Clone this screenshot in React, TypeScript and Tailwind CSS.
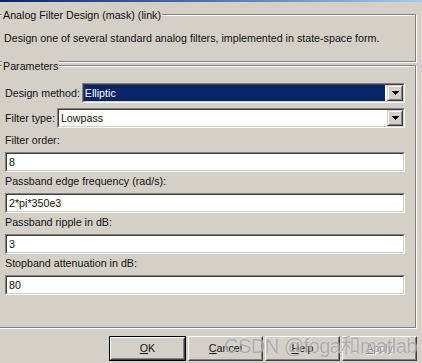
import React from "react";

const etched =
  "border border-[#808080] shadow-[1px_1px_0_#ffffff,inset_1px_1px_0_#ffffff]";

function Sunken({ children }: { children: React.ReactNode }) {
  return (
    <div className="h-[20px] border border-t-[#808080] border-l-[#808080] border-b-white border-r-white">
      <div className="h-full flex items-stretch bg-white border border-t-[#404040] border-l-[#404040] border-b-[#d4d0c8] border-r-[#d4d0c8]">
        {children}
      </div>
    </div>
  );
}

function DropButton() {
  return (
    <div className="w-[16px] shrink-0 bg-[#d4d0c8] border border-t-[#d4d0c8] border-l-[#d4d0c8] border-b-[#404040] border-r-[#404040]">
      <div className="h-full flex items-center justify-center border border-t-white border-l-white border-b-[#808080] border-r-[#808080]">
        <svg width="7" height="4" viewBox="0 0 7 4" shapeRendering="crispEdges">
          <path d="M0 0h7v1h-1v1h-1v1h-1v1h-1v-1h-1v-1h-1v-1h-1z" fill="#000" />
        </svg>
      </div>
    </div>
  );
}

function Combo({ value, selected }: { value: string; selected?: boolean }) {
  return (
    <Sunken>
      <div className="flex-1 flex items-center pr-[1px]">
        <span
          className={
            selected
              ? "flex-1 h-full flex items-center pl-[1px] bg-[#0a246a] text-white mr-[1px]"
              : "flex-1 h-full flex items-center pl-[2px]"
          }
        >
          {value}
        </span>
      </div>
      <DropButton />
    </Sunken>
  );
}

function Field({ label, value }: { label: string; value: string }) {
  return (
    <div className="flex flex-col">
      <div className="h-[14px] leading-[14px] mb-[5px]">{label}</div>
      <Sunken>
        <span className="flex items-center pl-[2px]">{value}</span>
      </Sunken>
    </div>
  );
}

function PushButton({
  children,
  isDefault,
  disabled,
}: {
  children: React.ReactNode;
  isDefault?: boolean;
  disabled?: boolean;
}) {
  return (
    <div
      className={
        isDefault
          ? "w-[77px] h-[25px] border border-black"
          : "w-[75px] h-[25px]"
      }
    >
      <div className="h-full border border-t-white border-l-white border-b-[#404040] border-r-[#404040]">
        <div
          className={
            disabled
              ? "h-full flex items-center justify-center border border-t-[#d4d0c8] border-l-[#d4d0c8] border-b-[#808080] border-r-[#808080] text-[#808080] [text-shadow:1px_1px_0_#ffffff]"
              : "h-full flex items-center justify-center border border-t-[#d4d0c8] border-l-[#d4d0c8] border-b-[#808080] border-r-[#808080]"
          }
        >
          {children}
        </div>
      </div>
    </div>
  );
}

export default function App() {
  return (
    <div className="relative w-[422px] h-[363px] overflow-hidden bg-[#d4d0c8] text-[#111] text-[10.7px] font-['Liberation_Sans',Arial,sans-serif]">
      <div className="h-[2px] bg-gradient-to-r from-[#0a246a] to-[#a6caf0]" />

      {/* mask description */}
      <div className={`relative mt-[12px] -ml-[4px] w-[420px] h-[48px] ${etched}`}>
        <span className="absolute -top-[7px] left-[5px] px-[1px] bg-[#d4d0c8] leading-[14px]">
          Analog Filter Design (mask) (link)
        </span>
        <div className="pt-[17px] pl-[7px] leading-[13px]">
          Design one of several standard analog filters, implemented in state-space form.
        </div>
      </div>

      {/* parameters */}
      <div className={`relative mt-[3px] -ml-[4px] w-[420px] h-[263px] ${etched}`}>
        <span className="absolute -top-[7px] left-[5px] px-[1px] bg-[#d4d0c8] leading-[14px]">
          Parameters
        </span>
        <div className="pt-[17px] pl-[8px] pr-[10px] flex flex-col">
          <div className="flex items-center gap-[2px]">
            <span className="whitespace-nowrap">Design method:</span>
            <div className="flex-1">
              <Combo value="Elliptic" selected />
            </div>
          </div>
          <div className="flex items-center gap-[2px] mt-[5px]">
            <span className="whitespace-nowrap">Filter type:</span>
            <div className="flex-1">
              <Combo value="Lowpass" />
            </div>
          </div>
          <div className="mt-[5px] flex flex-col gap-[2px]">
            <Field label="Filter order:" value="8" />
            <Field label="Passband edge frequency (rad/s):" value="2*pi*350e3" />
            <Field label="Passband ripple in dB:" value="3" />
            <Field label="Stopband attenuation in dB:" value="80" />
          </div>
        </div>
      </div>

      {/* buttons */}
      <div className="mt-[8px] pr-[5px] flex justify-end gap-[2px]">
        <PushButton isDefault>
          <span><span className="underline">O</span>K</span>
        </PushButton>
        <PushButton>
          <span><span className="underline">C</span>ancel</span>
        </PushButton>
        <PushButton>
          <span><span className="underline">H</span>elp</span>
        </PushButton>
        <PushButton disabled>
          <span><span className="underline">A</span>pply</span>
        </PushButton>
      </div>

      {/* watermark */}
      <div className="absolute left-[224px] top-[334px] text-[20px] leading-[24px] tracking-[-0.5px] text-[rgba(110,110,110,0.55)] [text-shadow:0_0_1px_rgba(255,255,255,0.9)] font-['Liberation_Sans','Noto_Sans_CJK_SC',sans-serif] pointer-events-none">
        CSDN @foga和matlab
      </div>
    </div>
  );
}
